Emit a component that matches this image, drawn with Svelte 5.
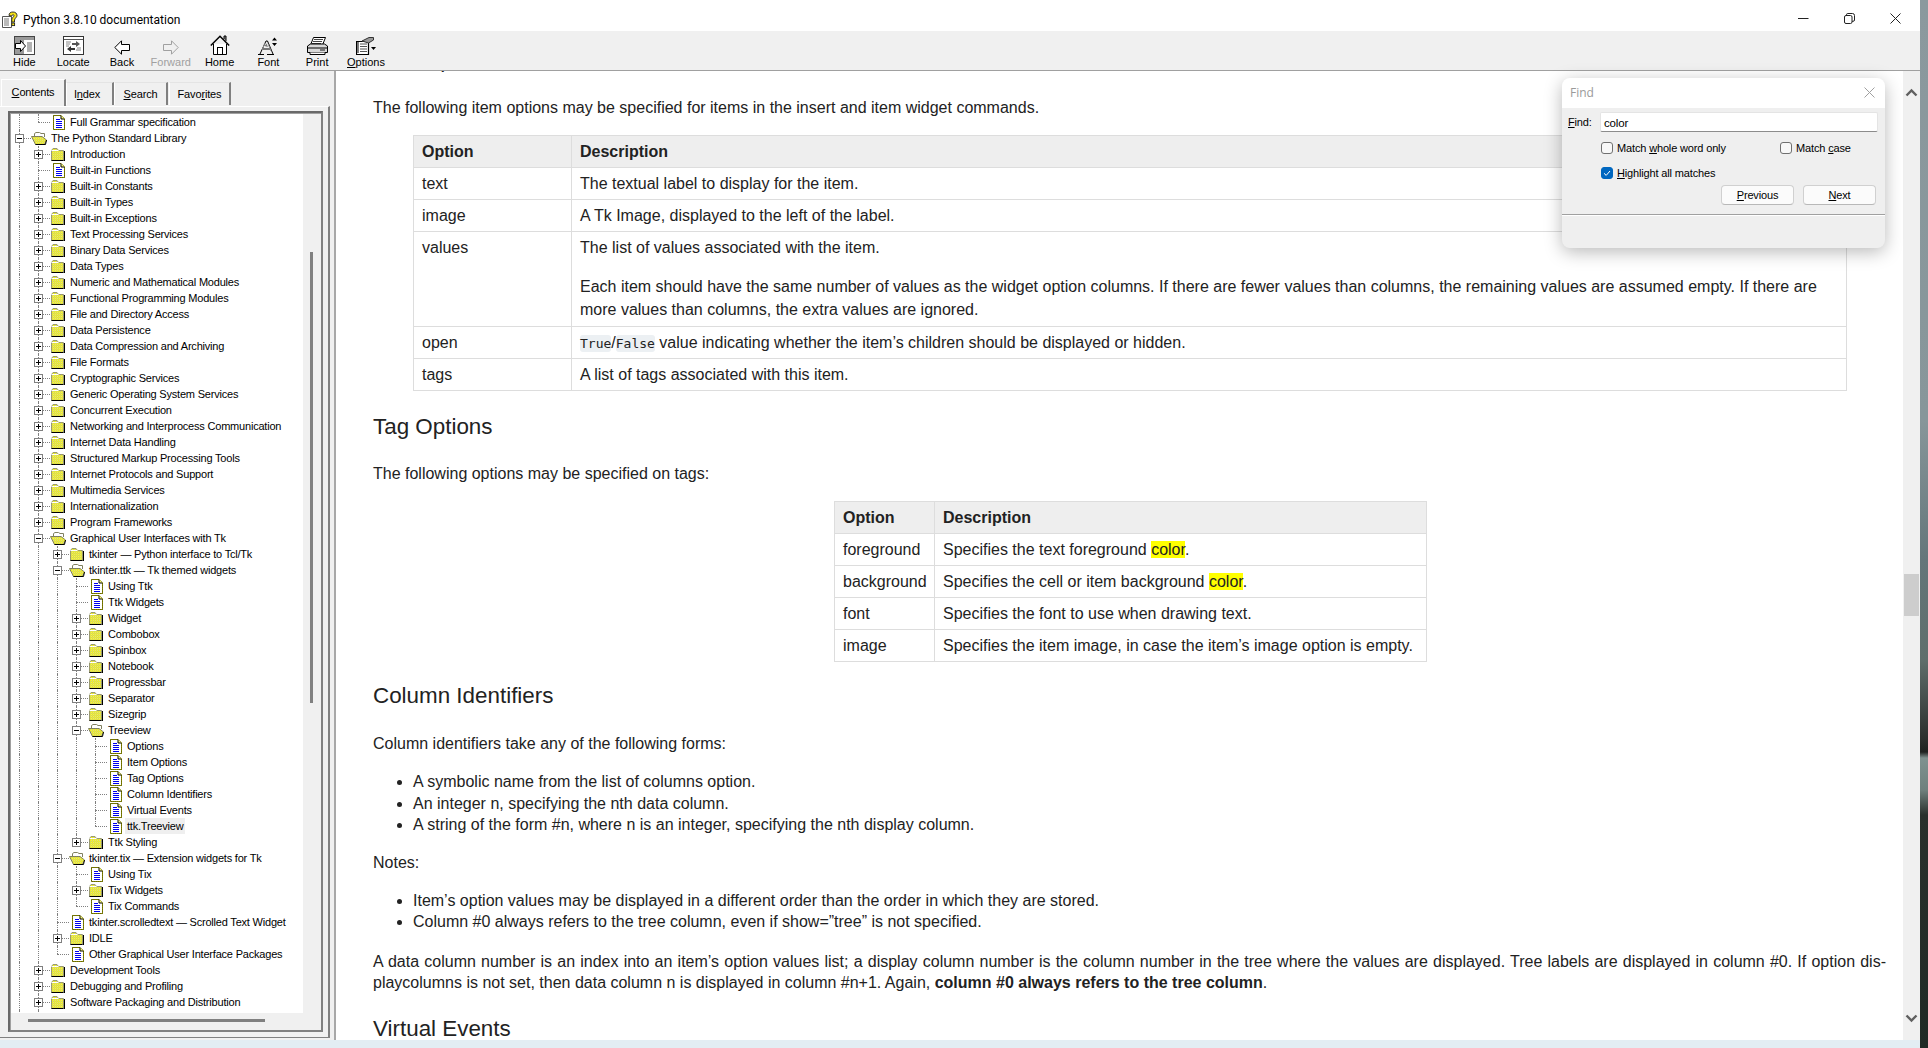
<script>
  const raw = [
    [1,'d','Full Grammar specification'],[0,'o','The Python Standard Library'],[1,'c','Introduction'],[1,'d','Built-in Functions'],
    [1,'c','Built-in Constants'],[1,'c','Built-in Types'],[1,'c','Built-in Exceptions'],[1,'c','Text Processing Services'],
    [1,'c','Binary Data Services'],[1,'c','Data Types'],[1,'c','Numeric and Mathematical Modules'],[1,'c','Functional Programming Modules'],
    [1,'c','File and Directory Access'],[1,'c','Data Persistence'],[1,'c','Data Compression and Archiving'],[1,'c','File Formats'],
    [1,'c','Cryptographic Services'],[1,'c','Generic Operating System Services'],[1,'c','Concurrent Execution'],
    [1,'c','Networking and Interprocess Communication'],[1,'c','Internet Data Handling'],[1,'c','Structured Markup Processing Tools'],
    [1,'c','Internet Protocols and Support'],[1,'c','Multimedia Services'],[1,'c','Internationalization'],[1,'c','Program Frameworks'],
    [1,'o','Graphical User Interfaces with Tk'],[2,'c','tkinter — Python interface to Tcl/Tk'],[2,'o','tkinter.ttk — Tk themed widgets'],
    [3,'d','Using Ttk'],[3,'d','Ttk Widgets'],[3,'c','Widget'],[3,'c','Combobox'],[3,'c','Spinbox'],[3,'c','Notebook'],[3,'c','Progressbar'],
    [3,'c','Separator'],[3,'c','Sizegrip'],[3,'o','Treeview'],[4,'d','Options'],[4,'d','Item Options'],[4,'d','Tag Options'],
    [4,'d','Column Identifiers'],[4,'d','Virtual Events'],[4,'d','ttk.Treeview'],[3,'c','Ttk Styling'],
    [2,'o','tkinter.tix — Extension widgets for Tk'],[3,'d','Using Tix'],[3,'c','Tix Widgets'],[3,'d','Tix Commands'],
    [2,'d','tkinter.scrolledtext — Scrolled Text Widget'],[2,'c','IDLE'],[2,'d','Other Graphical User Interface Packages'],
    [1,'c','Development Tools'],[1,'c','Debugging and Profiling'],[1,'c','Software Packaging and Distribution'],
    [1,'',''],[0,'','']
  ];
  function continues(i, l) {
    for (let j = i + 1; j < raw.length; j++) {
      if (raw[j][0] < l) return false;
      if (raw[j][0] === l) return true;
    }
    return false;
  }
  const rows = raw.map((r, i) => {
    const guides = [];
    for (let l = 0; l <= r[0]; l++) {
      const c = continues(i, l);
      if (c || l === r[0]) guides.push({ x: 8 + 19 * l, full: c });
    }
    return { level: r[0], type: r[1], text: r[2], guides };
  });
  const tools = [
    ['hide','Hide'],['locate','Locate'],['back','Back'],['forward','Forward'],['home','Home'],['font','Font'],['print','Print'],['options','Options']
  ];
</script>

<svg class="defs" width="0" height="0" aria-hidden="true">
  <defs>
    <pattern id="dither" width="2" height="2" patternUnits="userSpaceOnUse">
      <rect width="2" height="2" fill="#ffff00"/>
      <rect width="1" height="1" fill="#c4c490"/>
      <rect x="1" y="1" width="1" height="1" fill="#d0d0a0"/>
    </pattern>
    <symbol id="folder" viewBox="0 0 15 14">
      <path d="M1.5 13.5V3.5L3 1.5H7L8.5 3.5H13.5V13.5Z" fill="url(#dither)" stroke="#9a9a70"/>
      <path d="M1.5 3.5H8.5" stroke="#fff"/>
      <path d="M14.5 4V14.5H2" fill="none" stroke="#000"/>
      <path d="M13.5 13.5H1.5" stroke="#000"/>
    </symbol>
    <symbol id="folderopen" viewBox="0 0 16 14">
      <path d="M3.5 5V2.5L5 1.5H8.5L10 2.5H13.5V6" fill="#fff" stroke="#808060"/>
      <path d="M0.5 5.5H11L15.5 9L13.5 13.5H4.5Z" fill="url(#dither)" stroke="#808060"/>
      <path d="M4.5 13.5H14.5L15.5 9" fill="none" stroke="#000"/>
    </symbol>
    <symbol id="doc" viewBox="0 0 12 15">
      <path d="M0.5 0.5H8L11.5 4V14.5H0.5Z" fill="#fff" stroke="#e8e800"/>
      <path d="M0.5 0.5H8L11.5 4V14.5H0.5Z" fill="none" stroke="#000" stroke-dasharray="1 1"/>
      <path d="M8 .5V4H11.5" fill="#ffff80" stroke="#000"/>
      <path d="M3 4.5H7M3 6.5H9M3 8.5H9M3 10.5H9M3 12.5H9" stroke="#0000f0" stroke-width="1.1"/>
    </symbol>
    <symbol id="plus" viewBox="0 0 9 9">
      <rect x=".5" y=".5" width="8" height="8" fill="#fff" stroke="#808080"/>
      <path d="M2 4.5H7M4.5 2V7" stroke="#000"/>
    </symbol>
    <symbol id="minus" viewBox="0 0 9 9">
      <rect x=".5" y=".5" width="8" height="8" fill="#fff" stroke="#808080"/>
      <path d="M2 4.5H7" stroke="#000"/>
    </symbol>
  </defs>
</svg>

<div class="screen">
  <div class="window">
    <header class="titlebar">
      <svg class="appicon" width="16" height="17" viewBox="0 0 16 17">
        <path d="M.5 5.5H9.5V16.5H.5Z" fill="#fff" stroke="#555"/>
        <path d="M2 8H7M2 10H7M2 12H7M2 14H7" stroke="#777"/>
        <path d="M7 4.5C7 2 8.5 1 11 1S15 2.5 15 4.5C15 6.5 12.8 7 12.5 9V11H9.8V8.5C9.8 6.5 12 6 12 4.5C12 3.5 10 3.4 9.8 5Z" fill="#f5e21a" stroke="#222" stroke-width=".9"/>
        <rect x="9.8" y="12" width="2.8" height="2.6" fill="#f5e21a" stroke="#222" stroke-width=".9"/>
      </svg>
      <span class="title">Python 3.8.10 documentation</span>
      <div class="winctl">
        <svg width="11" height="11" viewBox="0 0 11 11"><path d="M0 5.5H10.5" stroke="#222"/></svg>
        <svg width="11" height="11" viewBox="0 0 11 11"><rect x=".5" y="2.5" width="7.5" height="8" rx="1.5" fill="none" stroke="#222"/><path d="M2.5 2.5V1.8Q2.5 .5 3.8 .5H8.5Q10.5 .5 10.5 2.5V7Q10.5 8.3 9 8.3H8" fill="none" stroke="#222"/></svg>
        <svg width="11" height="11" viewBox="0 0 11 11"><path d="M.5 .5L10.5 10.5M10.5 .5L.5 10.5" stroke="#222"/></svg>
      </div>
    </header>

    <div class="toolbar">
      {#each tools as t}
        <div class="tool" class:off={t[0] === 'forward'}>
          <span class="toolicon">
            {#if t[0] === 'hide'}
              <svg width="21" height="19" viewBox="0 0 21 19">
                <rect x=".5" y=".5" width="20" height="18" fill="#fff" stroke="#444"/>
                <rect x="1" y="1" width="19" height="3" fill="#999"/>
                <rect x="1" y="4" width="9" height="14" fill="#999"/>
                <path d="M13 7H18M13 9H18M13 11H18M13 13H18M13 15H18" stroke="#666"/>
                <path d="M1.5 7.5H6.5V4.5L11.5 10L6.5 15.5V12.5H1.5Z" fill="#fff" stroke="#000"/>
              </svg>
            {:else if t[0] === 'locate'}
              <svg width="21" height="19" viewBox="0 0 21 19">
                <rect x=".5" y=".5" width="20" height="18" fill="#fff" stroke="#333"/>
                <path d="M1 3.5H20" stroke="#555"/>
                <path d="M3 6H8M3 8H7M3 10H6M14 12H18M13 14H18" stroke="#888"/>
                <path d="M9 7H13V5L17 8L13 11V9H9Z" fill="#555"/>
                <path d="M12 12H8V10L4 13L8 16V14H12Z" fill="#333"/>
              </svg>
            {:else if t[0] === 'back'}
              <svg width="16" height="15" viewBox="0 0 16 15"><path d="M.8 7.5L7.5 .8V4.5H15.5V10.5H7.5V14.2Z" fill="#fff" stroke="#000"/></svg>
            {:else if t[0] === 'forward'}
              <svg width="16" height="15" viewBox="0 0 16 15"><path d="M15.2 7.5L8.5 .8V4.5H.5V10.5H8.5V14.2Z" fill="#f0f0f0" stroke="#a0a0a0"/></svg>
            {:else if t[0] === 'home'}
              <svg width="20" height="20" viewBox="0 0 20 20">
                <path d="M3.5 9V19.5H16.5V9" fill="#fff" stroke="#000"/>
                <path d="M.8 10.5L10 1.3L19.2 10.5" fill="none" stroke="#000" stroke-width="1.5"/>
                <path d="M14 4V1H16V6" fill="#888" stroke="#000"/>
                <rect x="7.5" y="12.5" width="5" height="7" fill="#fff" stroke="#000"/>
              </svg>
            {:else if t[0] === 'font'}
              <svg width="20" height="18" viewBox="0 0 20 18">
                <path d="M0 17.5H6M9 17.5H16M2 17L8 4H9.5L15 17M5 12H12" fill="none" stroke="#000"/>
                <path d="M6.5 9L8.5 6.5L10 10Z" fill="#777"/>
                <path d="M7 6L4 13M10 6.5L13 14" stroke="#888" fill="none"/>
                <path d="M14 3.5L16.5 0.5L19 3.5ZM14 6L16.5 9L19 6Z" fill="#000"/>
              </svg>
            {:else if t[0] === 'print'}
              <svg width="21" height="18" viewBox="0 0 21 18">
                <path d="M6.5 .5H18.5L15.5 8H3.5Z" fill="#fff" stroke="#000"/>
                <path d="M7 2.5H16M6 4.5H15M5 6.5H14" stroke="#444"/>
                <path d="M.5 9L3.5 7H17.5L20.5 9V15.5H.5Z" fill="#d8d8d8" stroke="#000"/>
                <path d="M.5 11H20.5" stroke="#000"/>
                <rect x="13" y="12" width="5" height="2" fill="#777"/>
                <path d="M3 15.5V17.5H18V15.5" fill="#fff" stroke="#000"/>
              </svg>
            {:else}
              <svg width="20" height="18" viewBox="0 0 20 18">
                <path d="M.5 4.5H12.5V17.5H.5Z" fill="#fff" stroke="#000" stroke-width="1.2"/>
                <path d="M2 4.5V16" stroke="#000"/>
                <path d="M4 7H11M4 9.5H11M4 12H11M4 14.5H11" stroke="#555"/>
                <path d="M6 4L13 .5H17.5V3L12.5 6Z" fill="#999" stroke="#333"/>
                <path d="M15 10H20L17.5 13Z" fill="#000"/>
              </svg>
            {/if}
          </span>
          {#if t[0] === 'options'}<span><u>O</u>ptions</span>{:else}<span>{t[1]}</span>{/if}
        </div>
      {/each}
    </div>

    <div class="main">
      <aside class="nav">
        <div class="tabs">
          <div class="tab active"><u>C</u>ontents</div>
          <div class="tab idx">I<u>n</u>dex</div>
          <div class="tab srch"><u>S</u>earch</div>
          <div class="tab fav">Favo<u>r</u>ites</div>
        </div>
        <div class="panel">
          <div class="treebox">
            <div class="tree">
              {#each rows as r}
                <div class="row">
                  {#each r.guides as g}
                    <i class="guide" class:half={!g.full} style="left:{g.x}px"></i>
                  {/each}
                  {#if r.type}
                    <i class="elbow" style="left:{8 + 19 * r.level}px"></i>
                    {#if r.type !== 'd'}
                      <svg class="exp" width="9" height="9" style="left:{4 + 19 * r.level}px"><use href={r.type === 'o' ? '#minus' : '#plus'}/></svg>
                    {/if}
                    <span class="ico" style="margin-left:{20 + 19 * r.level}px">
                      {#if r.type === 'd'}
                        <svg class="docico" width="12" height="15"><use href="#doc"/></svg>
                      {:else if r.type === 'o'}
                        <svg width="16" height="14"><use href="#folderopen"/></svg>
                      {:else}
                        <svg width="15" height="14"><use href="#folder"/></svg>
                      {/if}
                    </span>
                    <span class="label" class:sel={r.text === 'ttk.Treeview'}>{r.text}</span>
                  {/if}
                </div>
              {/each}
            </div>
            <div class="vtrack"><div class="vthumb"></div></div>
            <div class="htrack"><div class="hthumb"></div></div>
            <div class="corner"></div>
          </div>
        </div>
      </aside>

      <main class="content">
        <h3 class="first">Item Options</h3>
        <p class="p1">The following item options may be specified for items in the insert and item widget commands.</p>
        <table class="t1">
          <colgroup><col class="c1a"/><col/></colgroup>
          <thead><tr><th>Option</th><th>Description</th></tr></thead>
          <tbody>
            <tr><td>text</td><td>The textual label to display for the item.</td></tr>
            <tr><td>image</td><td>A Tk Image, displayed to the left of the label.</td></tr>
            <tr class="tall"><td>values</td><td>
              <div class="cellp">The list of values associated with the item.</div>
              <div class="cellq">Each item should have the same number of values as the widget option columns. If there are fewer values than columns, the remaining values are assumed empty. If there are more values than columns, the extra values are ignored.</div>
            </td></tr>
            <tr><td>open</td><td><code>True</code>/<code>False</code> value indicating whether the item’s children should be displayed or hidden.</td></tr>
            <tr><td>tags</td><td>A list of tags associated with this item.</td></tr>
          </tbody>
        </table>

        <h3 class="h-tag">Tag Options</h3>
        <p class="p2">The following options may be specified on tags:</p>
        <table class="t2">
          <colgroup><col class="c2a"/><col/></colgroup>
          <thead><tr><th>Option</th><th>Description</th></tr></thead>
          <tbody>
            <tr><td>foreground</td><td>Specifies the text foreground <mark>color</mark>.</td></tr>
            <tr><td>background</td><td>Specifies the cell or item background <mark>color</mark>.</td></tr>
            <tr><td>font</td><td>Specifies the font to use when drawing text.</td></tr>
            <tr><td>image</td><td>Specifies the item image, in case the item’s image option is empty.</td></tr>
          </tbody>
        </table>

        <h3 class="h-col">Column Identifiers</h3>
        <p class="p3">Column identifiers take any of the following forms:</p>
        <ul class="u1">
          <li>A symbolic name from the list of columns option.</li>
          <li>An integer n, specifying the nth data column.</li>
          <li>A string of the form #n, where n is an integer, specifying the nth display column.</li>
        </ul>
        <p class="p4">Notes:</p>
        <ul class="u2">
          <li>Item’s option values may be displayed in a different order than the order in which they are stored.</li>
          <li>Column #0 always refers to the tree column, even if show=”tree” is not specified.</li>
        </ul>
        <p class="p5"><span class="justified">A data column number is an index into an item’s option values list; a display column number is the column number in the tree where the values are displayed. Tree labels are displayed in column #0. If option dis-</span>playcolumns is not set, then data column n is displayed in column #n+1. Again, <strong>column #0 always refers to the tree column</strong>.</p>
        <h3 class="h-virt">Virtual Events</h3>
      </main>

      <div class="scroll">
        <svg width="13" height="9" viewBox="0 0 13 9"><path d="M1.5 7.5L6.5 2.5L11.5 7.5" fill="none" stroke="#606060" stroke-width="2.4"/></svg>
        <div class="scrollthumb"></div>
        <svg width="13" height="9" viewBox="0 0 13 9"><path d="M1.5 1.5L6.5 6.5L11.5 1.5" fill="none" stroke="#606060" stroke-width="2.4"/></svg>
      </div>

      <section class="find">
        <div class="findtitle">
          <span>Find</span>
          <svg width="11" height="11" viewBox="0 0 11 11"><path d="M.5 .5L10.5 10.5M10.5 .5L.5 10.5" stroke="#a0a0a0"/></svg>
        </div>
        <div class="findbody">
          <div class="findrow">
            <span class="findlabel"><u>F</u>ind:</span>
            <div class="findinput">color</div>
          </div>
          <div class="checks">
            <label class="chk"><i class="box"></i><span>Match <u>w</u>hole word only</span></label>
            <label class="chk"><i class="box"></i><span>Match <u>c</u>ase</span></label>
            <label class="chk"><i class="box on"><svg width="12" height="12" viewBox="0 0 12 12"><path d="M3 6.3L5.2 8.4L9 4" fill="none" stroke="#fff" stroke-width="1"/></svg></i><span><u>H</u>ighlight all matches</span></label>
          </div>
          <div class="btns">
            <div class="btn"><u>P</u>revious</div>
            <div class="btn"><u>N</u>ext</div>
          </div>
        </div>
        <div class="findstatus"></div>
      </section>
    </div>
    <div class="band"></div>
  </div>
  <div class="wall"></div>
</div>

<style>
  :global(body) { margin: 0; background: #fff; overflow: hidden; }
  .defs { position: absolute; }
  .screen { display: flex; width: 1928px; height: 1048px; overflow: hidden; font-family: "Liberation Sans", Arial, sans-serif; }
  .window { width: 1920px; display: flex; flex-direction: column; position: relative; }
  .wall { width: 8px; background: linear-gradient(#8b999e 0, #87969a 420px, #64767a 560px, #5f6e6b 660px, #2a2e2c 740px, #1e2220 752px, #7f9290 758px, #6f807d 790px, #2a302c 815px, #1f2a25 1048px); }

  .titlebar { height: 31px; box-sizing: border-box; padding-top: 6px; background: #fff; display: flex; align-items: center; flex: none; }
  .appicon { margin-left: 2px; margin-top: 2px; }
  .title { margin: 3px 0 0 5px; font: 12px Roboto, sans-serif; color: #000; flex: 1; }
  .winctl { display: flex; margin-right: 19px; gap: 35px; }

  .toolbar { height: 39px; flex: none; display: flex; background: #f0f0f0; border-bottom: 1px solid #a0a0a0; }
  .tool { width: 48.8px; display: flex; flex-direction: column; align-items: center; font-size: 11px; color: #000; white-space: nowrap; }
  .tool.off { color: #a0a0a0; }
  .toolicon { height: 24px; display: flex; align-items: flex-end; }
  .tool > span:last-child { line-height: 14px; }

  .main { flex: 1; display: flex; min-height: 0; position: relative; }
  .nav { width: 334px; flex: none; background: #f0f0f0; border-right: 2px solid #a8a8a8; display: flex; flex-direction: column; }

  .tabs { display: flex; align-items: flex-end; height: 27px; margin-top: 8px; position: relative; z-index: 1; font-size: 11px; letter-spacing: -0.15px; }
  .tab { height: 23px; line-height: 22px; box-sizing: border-box; text-align: center; background: #f0f0f0; border-top: 1px solid #e4e4e4; border-left: 1px solid #fff; border-right: 2px solid #808080; margin-bottom: 1px; color: #000; }
  .tab.active { width: 65px; height: 27px; line-height: 24px; margin-bottom: 0; border-top: 1px solid #fff; border-left: 1px solid #fff; margin-left: 1px; }
  .tab.idx { width: 48px; padding-right: 5px; }
  .tab.srch { width: 54px; }
  .tab.fav { width: 62px; margin-left: 1px; }

  .panel { width: 330px; flex: none; height: 932px; box-sizing: border-box; border-top: 1px solid #fff; border-right: 2px solid #808080; border-bottom: 1px solid #808080; padding: 4px 0 0 8px; }
  .treebox { width: 315px; height: 921px; box-sizing: border-box; border: 2px solid #696969; border-right-color: #808080; border-bottom-color: #808080; display: grid; grid-template-columns: 292px 1fr; grid-template-rows: 899px 1fr; box-shadow: inset 1px 1px 0 #a0a0a0; padding: 1px 1px 0 1px; }
  .tree { background: #fff; overflow: hidden; }
  .row { position: relative; height: 16px; display: flex; align-items: center; font-size: 11px; letter-spacing: -0.2px; line-height: 16px; color: #000; white-space: nowrap; }
  .guide { position: absolute; top: 0; height: 16px; border-left: 1px dotted #808080; }
  .guide.half { height: 8px; }
  .elbow { position: absolute; top: 8px; width: 12px; border-top: 1px dotted #808080; }
  .exp { position: absolute; top: 4px; }
  .ico { width: 16px; height: 16px; display: flex; align-items: center; flex: none; position: relative; }
  .docico { margin-left: 3px; }
  .label { margin-left: 2px; padding: 0 2px; }
  .label.sel { background: #efefef; }
  .vtrack, .htrack, .corner { background: #f0f0f0; }
  .vthumb { width: 3px; height: 451px; margin: 138px 0 0 7px; background: #808080; }
  .htrack { padding-top: 6px; }
  .hthumb { width: 237px; height: 3px; margin-left: 17px; background: #808080; }

  .content { flex: 1; min-width: 0; background: #fff; padding-left: 37px; overflow: hidden; color: #222; font-size: 16px; line-height: 22px; }
  h3 { font-size: 22.4px; font-weight: 400; line-height: 28px; margin: 0; color: #222; }
  p { margin: 0; }
  .first { margin-top: -25px; }
  .p1 { margin-top: 23px; }
  table { border-collapse: collapse; table-layout: fixed; }
  .t1 { width: 1434px; margin: 16px 0 0 40px; }
  .c1a { width: 158px; }
  .t2 { width: 593px; margin: 16px 0 0 461px; }
  .c2a { width: 100px; }
  th, td { border: 1px solid #ddd; padding: 5px 8px 4px; text-align: left; vertical-align: top; line-height: 22px; }
  th { background: #eee; font-weight: 700; }
  .cellq { margin-top: 16px; line-height: 23px; }
  .tall td { padding-bottom: 5px; }
  code { font: 13px/1 "DejaVu Sans Mono", monospace; background: #ecf0f3; border-radius: 3px; padding: 1px 0; }
  mark { background: #ff0; color: #222; }
  .h-tag { margin-top: 22px; }
  .p2 { margin-top: 22px; }
  .h-col { margin-top: 20px; }
  .p3 { margin-top: 23px; }
  ul { margin: 0; padding: 0 0 0 40px; }
  li { line-height: 21.5px; }
  .u1 { margin-top: 16px; }
  .p4 { margin-top: 16px; }
  .u2 { margin-top: 16px; }
  .p5 { margin-top: 18px; line-height: 21px; white-space: nowrap; }
  .justified { display: block; width: 1513px; white-space: normal; text-align: justify; text-align-last: justify; }
  .h-virt { margin-top: 22px; }

  .scroll { width: 17px; flex: none; background: #f0f0f0; position: relative; display: flex; flex-direction: column; align-items: center; }
  .scroll svg { flex: none; }
  .scroll svg:first-child { margin-top: 17px; }
  .scrollthumb { width: 15px; height: 42px; background: #cdcdcd; margin-top: 477px; }
  .scroll svg:last-child { margin-top: 398px; }

  .band { height: 8px; flex: none; background: #e3edf3; }

  .find { position: absolute; left: 1562px; top: 7px; width: 323px; height: 170px; border-radius: 8px; overflow: hidden; background: #efefef; box-shadow: 0 4px 18px rgba(0,0,0,.28); display: flex; flex-direction: column; font-size: 11px; letter-spacing: -0.15px; color: #000; }
  .findtitle { height: 30px; flex: none; box-sizing: border-box; padding: 0 10px 2px 8px; background: #fff; display: flex; align-items: center; justify-content: space-between; color: #9a9a9a; font: 12px "Open Sans", sans-serif; letter-spacing: 0; }
  .findbody { flex: 1; padding: 4px 7px 0 6px; }
  .findrow { display: flex; align-items: center; height: 20px; }
  .findlabel { width: 32px; }
  .findinput { width: 278px; height: 20px; box-sizing: border-box; background: #fff; border: 1px solid #e4e4e4; border-bottom: 1px solid #8c8c8c; border-radius: 2px; padding: 0 3px; line-height: 20px; color: #000; font-size: 11.5px; }
  .checks { display: grid; grid-template-columns: 179px 1fr; row-gap: 7px; margin: 7px 0 0 33px; }
  .chk { display: flex; align-items: center; gap: 4px; height: 18px; }
  .box { width: 12px; height: 12px; box-sizing: border-box; border: 1px solid #707070; border-radius: 3px; background: #f8f8f8; display: block; }
  .box.on { background: #0067c0; border-color: #0067c0; position: relative; }
  .box.on svg { position: absolute; left: -1px; top: -1px; }
  .btns { display: flex; gap: 9px; margin: 3px 0 0 153px; }
  .btn { width: 73px; height: 20px; box-sizing: border-box; border: 1px solid #d0d0d0; border-bottom-color: #b8b8b8; border-radius: 4px; background: #fbfbfb; text-align: center; line-height: 18px; }
  .findstatus { height: 33px; flex: none; border-top: 1px solid #a0a0a0; box-shadow: inset 0 1px 0 #fff; }
</style>
